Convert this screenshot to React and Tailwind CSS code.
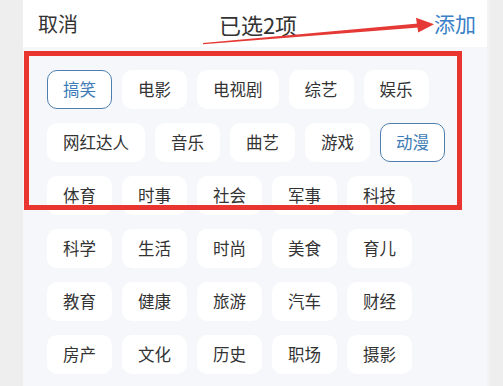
import React from "react";

const rows = [
  "搞笑", "电影", "电视剧", "综艺", "娱乐",
  "网红达人", "音乐", "曲艺", "游戏", "动漫",
  "体育", "时事", "社会", "军事", "科技",
  "科学", "生活", "时尚", "美食", "育儿",
  "教育", "健康", "旅游", "汽车", "财经",
  "房产", "文化", "历史", "职场", "摄影",
];
const selected = new Set(["搞笑", "动漫"]);

function Chip({ label }) {
  const on = selected.has(label);
  return (
    <div
      className={
        "h-[39px] px-[15px] flex items-center rounded-[10px] border-[1.5px] bg-white text-[16.5px] leading-none " +
        (on ? "border-[#4f7fae] text-[#3d7bb6]" : "border-transparent text-[#333333]")
      }
    >
      {label}
    </div>
  );
}

export default function App() {
  return (
    <div
      className="relative w-[503px] h-[386px] overflow-hidden bg-[#eeeeee] flex"
      style={{ fontFamily: '"Noto Sans CJK SC", "Noto Sans", sans-serif' }}
    >
      <div className="ml-[23px] w-[467px] h-full flex flex-col">
        <div className="h-[47px] shrink-0 bg-white flex items-center justify-between pl-[15px] pr-[14px] leading-none">
          <span className="text-[20px] text-[#333333]">取消</span>
          <span className="text-[22px] text-[#333333] ml-[4px]">已选2项</span>
          <span className="text-[21px] text-[#3a80c6]">添加</span>
        </div>
        <div className="flex-1 bg-[#f5f7fa] pl-[24px] pr-[25px] pt-[23px] flex flex-wrap content-start gap-x-[10px] gap-y-[14px]">
          {rows.map((r) => (
            <Chip key={r} label={r} />
          ))}
        </div>
      </div>
      <div className="absolute right-[13px] top-0 w-[3px] h-full bg-[#f2f3f5]" />

      {/* annotation overlay */}
      <div className="absolute left-[24px] top-[51px] w-[438px] h-[159px] border-[5px] border-[#e8352f]" />
      <svg className="absolute left-0 top-0" width="503" height="386" viewBox="0 0 503 386">
        <polygon
          points="203,43 418.2,23.4 418.6,27.4 203.1,44.2"
          fill="#e53935"
        />
        <polygon points="434,24.3 416,17.8 418.2,32.6" fill="#e53935" />
      </svg>
    </div>
  );
}
